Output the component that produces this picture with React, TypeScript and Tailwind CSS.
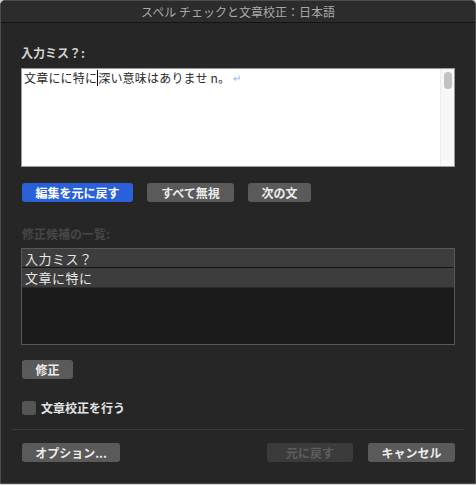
import React from "react";

const font = { fontFamily: '"Noto Sans CJK JP", "Noto Sans", sans-serif' };

function Btn({ w, label, kind = "gray" }: { w: string; label: string; kind?: "gray" | "blue" | "disabled" }) {
  const cls =
    kind === "blue"
      ? "bg-[#2a60d8] text-white"
      : kind === "disabled"
      ? "bg-[#3b3b3b] text-[#5e5e5e]"
      : "bg-[#5a5a5a] text-[#ececec]";
  return (
    <div className={`${w} h-[19px] rounded-[3px] flex items-center justify-center text-[12px] font-bold leading-none ${cls}`}>
      {label}
    </div>
  );
}

export default function App() {
  return (
    <div className="w-[476px] h-[485px] bg-[#cfcfcf]" style={font}>
      <div className="w-[476px] h-[484px] bg-[#262626] border border-[#4c4c4c] rounded-t-[5px] flex flex-col overflow-hidden">
        <div className="h-[22px] shrink-0 bg-[#2c2c2c] border-b border-[#141414] flex items-center justify-center text-[12px] text-[#a9a9a9] leading-none">
          スペル チェックと文章校正：日本語
        </div>
        <div className="flex flex-col px-[20px] pt-[22px]">
          <div className="text-[12px] font-bold text-[#d2d2d2] leading-[16px] h-[16px]">入力ミス？:</div>
          <div className="mt-[7px] h-[99px] bg-white border border-[#9a9a9a] flex">
            <div className="flex-1 pl-[2px] pt-[1px] text-[12px] tracking-[0.2px] leading-[16px] text-[#2a2a2a] flex items-start">
              <span>文章にに特に</span>
              <span className="w-px h-[16px] bg-black" />
              <span>深い意味はありませ n。</span>
              <span className="text-[#8fb3e6] text-[10px] ml-[3px]">↵</span>
            </div>
            <div className="w-[14px] bg-[#f7f7f7] border-l border-[#ececec] flex justify-center pt-[3px]">
              <div className="w-[8px] h-[17px] rounded-full bg-[#c2c2c2]" />
            </div>
          </div>
          <div className="mt-[16px] flex gap-[14px] pl-[1px]">
            <Btn w="w-[111px]" label="編集を元に戻す" kind="blue" />
            <Btn w="w-[87px]" label="すべて無視" />
            <Btn w="w-[63px]" label="次の文" />
          </div>
          <div className="mt-[24px] text-[12px] font-bold text-[#474747] leading-[16px] h-[16px] pl-[1px]">修正候補の一覧:</div>
          <div className="mt-[6px] h-[97px] bg-[#1b1b1b] border border-[#585858] flex flex-col">
            <div className="h-[19px] bg-[#3d3d3d] border-b border-[#161616] text-[13px] tracking-[0.5px] text-[#e6e6e6] leading-[19px] pl-[3px]">入力ミス？</div>
            <div className="h-[20px] bg-[#3d3d3d] border-b border-[#2a2a2a] text-[13px] tracking-[0.5px] text-[#e6e6e6] leading-[19px] pl-[3px]">文章に特に</div>
          </div>
          <div className="mt-[15px] pl-[1px]">
            <Btn w="w-[51px]" label="修正" />
          </div>
          <div className="mt-[22px] flex items-center gap-[5px] pl-[1px]">
            <div className="w-[14px] h-[14px] rounded-[3px] bg-[#555555]" />
            <span className="text-[12px] font-bold text-[#e2e2e2] leading-none">文章校正を行う</span>
          </div>
        </div>
        <div className="mt-[14px] mx-[11px] h-px bg-[#3a3a3a]" />
        <div className="mt-[13px] px-[20px] flex items-center pl-[21px]">
          <Btn w="w-[98px]" label="オプション..." />
          <div className="flex-1" />
          <Btn w="w-[86px]" label="元に戻す" kind="disabled" />
          <div className="w-[15px]" />
          <Btn w="w-[87px]" label="キャンセル" />
        </div>
      </div>
    </div>
  );
}
